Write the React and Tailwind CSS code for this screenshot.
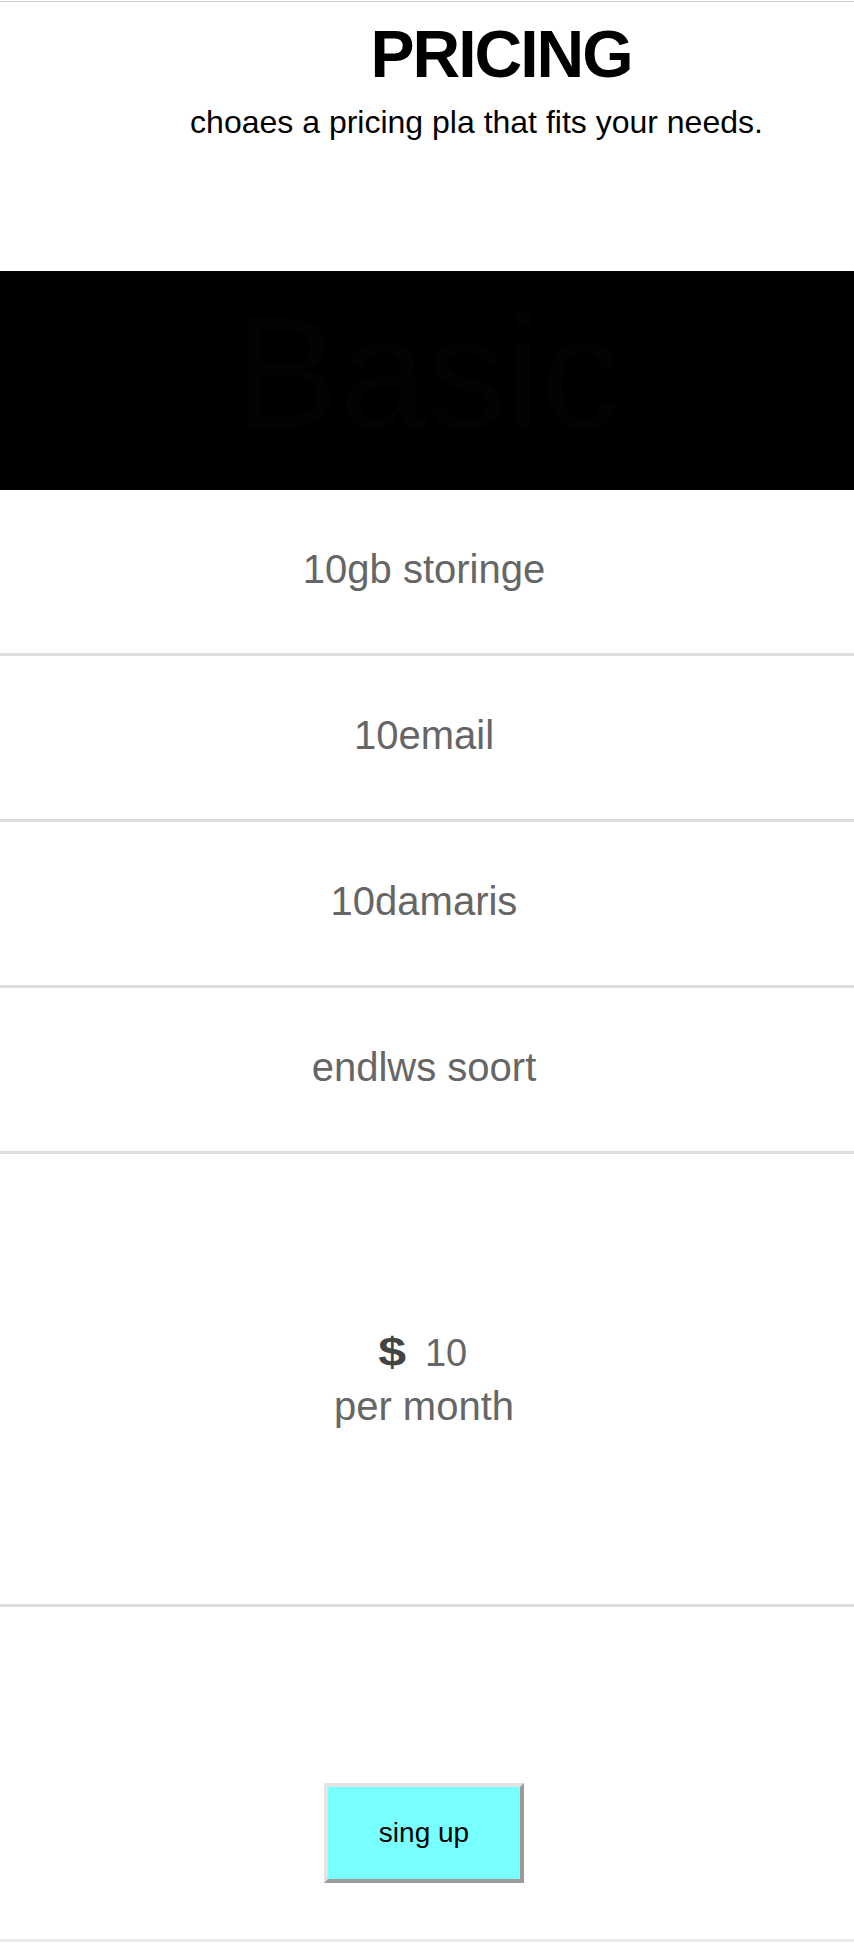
import React from 'react';

const FEATURES = ['10gb storinge', '10email', '10damaris', 'endlws soort'];

export default function App() {
  return (
    <div className="bg-white font-['Liberation_Sans',Arial,Helvetica,sans-serif]">
      <div className="mt-px border-t border-[#cfcfcf]">
        {/* Header */}
        <header className="h-[269px] pt-[19px]">
          <h1 className="pl-[148px] text-center text-[66px] font-bold leading-none tracking-[-2px] text-black">
            PRICING
          </h1>
          <p className="mt-[19px] pl-[99px] text-center text-[32px] leading-none text-black">
            choaes a pricing pla that fits your needs.
          </p>
        </header>

        {/* Plan name */}
        <div className="flex h-[219px] justify-center bg-black pt-[22px]">
          <h2 className="h-[160px] text-[158px] leading-none text-[#030303]">Basic</h2>
        </div>

        {/* Features */}
        {FEATURES.map((item) => (
          <div
            key={item}
            className="flex h-[166px] items-center justify-center border-b-[3px] border-[#dddddd] pb-[6px] pr-[6px] text-[40px] leading-none text-[#666]"
          >
            {item}
          </div>
        ))}

        {/* Price */}
        <div className="flex h-[453px] flex-col items-center justify-center gap-[14px] border-b-[3px] border-[#dddddd] pr-[6px] leading-none">
          <div className="flex items-baseline text-[38px]">
            <span className="scale-x-125 text-[40px] font-bold text-[#444]">$</span>
            <span className="ml-[22px] text-[#666]">10</span>
          </div>
          <div className="text-[40px] text-[#666]">per month</div>
        </div>

        {/* Sign up */}
        <div className="flex h-[335px] justify-center border-b-[3px] border-[#ebebeb] pr-[6px] pt-[176px]">
          <button className="h-[100px] w-[200px] border-4 border-t-[#e3e3e3] border-l-[#e3e3e3] border-r-[#9a9a9a] border-b-[#9a9a9a] bg-[#78ffff] text-[28px] text-black">
            sing up
          </button>
        </div>
      </div>
    </div>
  );
}
